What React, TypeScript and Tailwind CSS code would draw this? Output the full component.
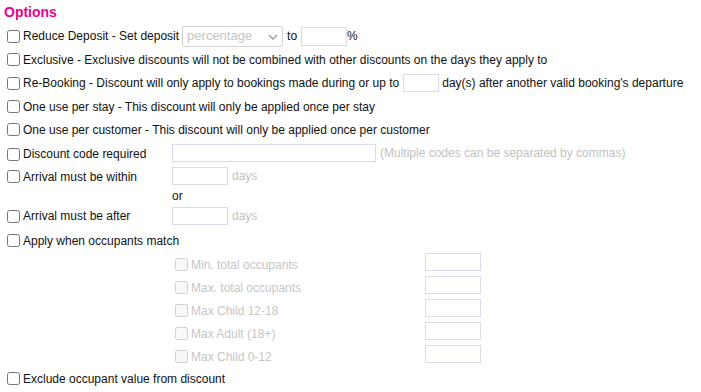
function Check({ disabled }: { disabled?: boolean }) {
  return (
    <input
      type="checkbox"
      disabled={disabled}
      className="m-0 ml-[3px] mr-[3px] h-[13px] w-[13px] shrink-0"
    />
  );
}

function SubRow({ label }: { label: string }) {
  return (
    <div className="flex h-[23px] items-start pl-[168px]">
      <label className="flex h-full w-[253px] items-center pt-[2px] text-[#c6c6c6]">
        <Check disabled />
        <span>{label}</span>
      </label>
      <input disabled className="mt-[1px] h-[18px] w-[56px] border border-[#dcd9ee] bg-white" />
    </div>
  );
}

export default function App() {
  return (
    <div className="min-h-screen bg-white pl-[4px] font-['Liberation_Sans',Arial,sans-serif] text-[12px] leading-[14px] text-[#111]">
      <h3 className="h-[24px] pt-[4px] text-[14px] font-bold leading-[16px] text-[#ec008c]">Options</h3>

      {/* Reduce deposit */}
      <div className="flex h-[24px] items-center">
        <Check />
        <span>Reduce Deposit - Set deposit</span>
        <div className="relative ml-[3px] h-[21px] w-[101px]">
          <select
            disabled
            className="h-full w-full appearance-none rounded-[2px] border border-[#d2d2d2] bg-white pl-[4px] text-[13px] text-[#c4c4c4]"
          >
            <option>percentage</option>
          </select>
          <svg className="absolute right-[5px] top-[8px] h-[6px] w-[10px]" viewBox="0 0 10 6" fill="none">
            <polyline points="1,1 5,5 9,1" stroke="#a4a4a4" strokeWidth="1.6" />
          </svg>
        </div>
        <span className="mx-[4px]">to</span>
        <input className="h-[19px] w-[46px] border border-[#dcd9ee] bg-white" />
        <span>%</span>
      </div>

      <div className="flex h-[23px] items-center">
        <Check />
        <span>Exclusive - Exclusive discounts will not be combined with other discounts on the days they apply to</span>
      </div>

      <div className="flex h-[24px] items-center">
        <Check />
        <span>Re-Booking - Discount will only apply to bookings made during or up to</span>
        <input className="ml-[4px] h-[18px] w-[36px] border border-[#dcd9ee] bg-white" />
        <span className="ml-[3px]">day(s) after another valid booking's departure</span>
      </div>

      <div className="flex h-[23px] items-center">
        <Check />
        <span>One use per stay - This discount will only be applied once per stay</span>
      </div>

      <div className="flex h-[23px] items-center">
        <Check />
        <span>One use per customer - This discount will only be applied once per customer</span>
      </div>

      <div className="flex h-[23px] items-center">
        <label className="flex h-full w-[168px] items-center pt-[3px]">
          <Check />
          <span>Discount code required</span>
        </label>
        <input className="h-[18px] w-[204px] border border-[#dcd9ee] bg-white" />
        <span className="ml-[4px] text-[#c2c2c2]">(Multiple codes can be separated by commas)</span>
      </div>

      <div className="flex h-[23px] items-center">
        <label className="flex h-full w-[168px] items-center pt-[2px]">
          <Check />
          <span>Arrival must be within</span>
        </label>
        <input className="h-[18px] w-[56px] border border-[#dcd9ee] bg-white" />
        <span className="ml-[4px] text-[#c2c2c2]">days</span>
      </div>

      <div className="flex h-[18px] items-center pl-[168px]">or</div>

      <div className="flex h-[22px] items-center">
        <label className="flex w-[168px] items-center">
          <Check />
          <span>Arrival must be after</span>
        </label>
        <input className="h-[18px] w-[56px] border border-[#dcd9ee] bg-white" />
        <span className="ml-[4px] text-[#c2c2c2]">days</span>
      </div>

      <div className="mt-[2px] flex h-[23px] items-center">
        <Check />
        <span>Apply when occupants match</span>
      </div>

      <SubRow label="Min. total occupants" />
      <SubRow label="Max. total occupants" />
      <SubRow label="Max Child 12-18" />
      <SubRow label="Max Adult (18+)" />
      <SubRow label="Max Child 0-12" />

      <div className="flex h-[23px] items-center">
        <Check />
        <span>Exclude occupant value from discount</span>
      </div>
    </div>
  );
}
